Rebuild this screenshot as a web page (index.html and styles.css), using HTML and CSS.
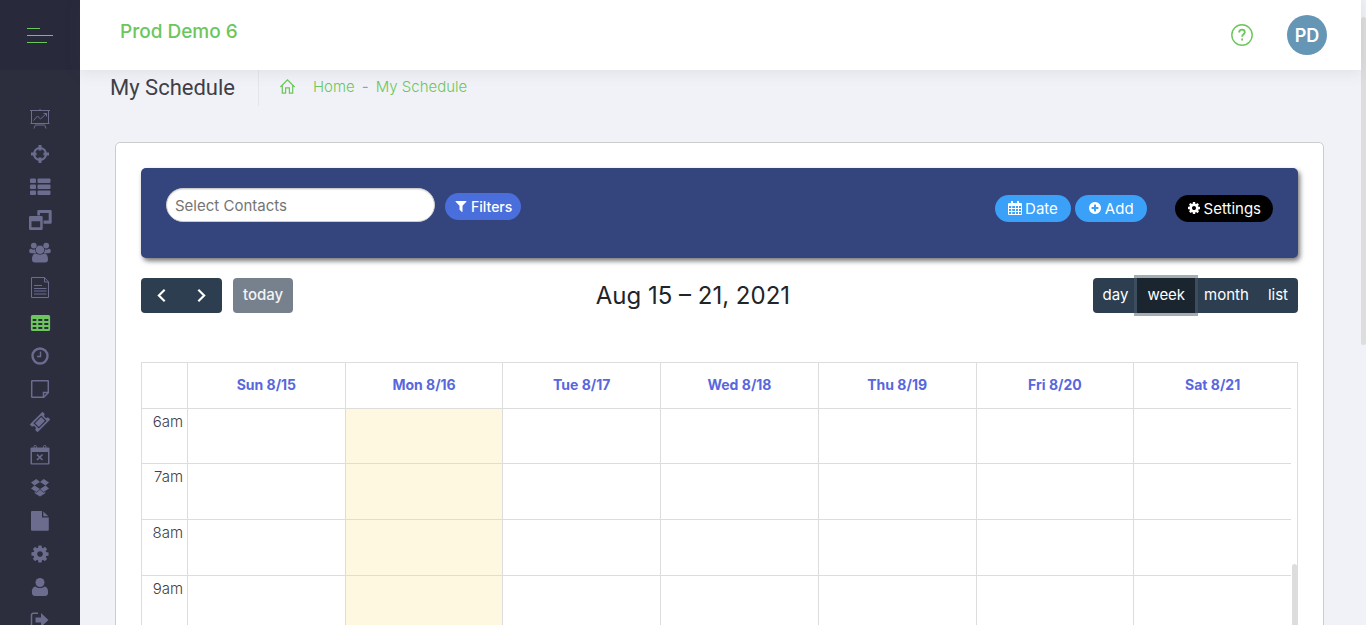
FILE: index.html
```html
<!DOCTYPE html>
<html lang="en">
<head>
    <meta charset="utf-8">
    <title>My Schedule</title>
    <link rel="stylesheet" href="styles.css">
</head>
<body>
    <aside class="sidebar">
        <button type="button" class="menu-toggle" aria-label="Toggle menu">
            <span class="bar bar-short"></span>
            <span class="bar"></span>
            <span class="bar bar-mid"></span>
        </button>
        <nav class="side-nav">
            <a href="#" class="tall" aria-label="Dashboard">
                <svg viewBox="0 0 24 24" class="thin"><path d="M2 3.500h20M12 2v1.500M3.500 3.500v13h17v-13M2.500 16.500h19M7.500 17.500l-1.500 4M16.500 17.500l1.500 4M8 18h8M5.500 13.500l4-4.500 3 3 6-5.500M15.500 6.500h3v3"/></svg>
            </a>
            <a href="#" aria-label="Leads">
                <svg viewBox="0 0 24 24"><circle cx="12" cy="12" r="6" fill="none" stroke="currentColor" stroke-width="2"/><path d="M10.500 3h3v5.500h-3zM10.500 15.500h3V21h-3zM3 10.500h5.500v3H3zM15.500 10.500H21v3h-5.500z"/></svg>
            </a>
            <a href="#" aria-label="Lists">
                <svg viewBox="0 0 24 24"><rect x="2" y="3.500" width="6" height="4.500" rx="1"/><rect x="9.500" y="3.500" width="13" height="4.500" rx="1"/><rect x="2" y="9.500" width="6" height="4.500" rx="1"/><rect x="9.500" y="9.500" width="13" height="4.500" rx="1"/><rect x="2" y="15.500" width="6" height="4.500" rx="1"/><rect x="9.500" y="15.500" width="13" height="4.500" rx="1"/></svg>
            </a>
            <a href="#" aria-label="Windows">
                <svg viewBox="0 0 24 24"><path fill-rule="evenodd" d="M10.500 2h12a1.200 1.200 0 0 1 1.200 1.200v11.300a1.200 1.200 0 0 1-1.200 1.200H15.500v-3.200h5.200V5h-8.700v2.500h-2.700V3.200A1.200 1.200 0 0 1 10.500 2zM2.200 8h11.300a1.200 1.200 0 0 1 1.200 1.200v11.600a1.200 1.200 0 0 1-1.200 1.200H2.200A1.200 1.200 0 0 1 1 20.800V9.200A1.200 1.200 0 0 1 2.200 8zM3.500 13.200v6h8.700v-6z"/></svg>
            </a>
            <a href="#" aria-label="Contacts">
                <svg viewBox="0 0 24 24"><circle cx="5.800" cy="4.600" r="2.900"/><circle cx="18.200" cy="4.600" r="2.900"/><circle cx="12" cy="8.800" r="4.300"/><path d="M3.500 8c1.500.9 2.500.7 3.500.3.100 1.600.5 2.800 1.300 4H3.600C1.800 12.300 1.200 11.500 1.200 10.300 1.200 8.800 2 7.200 3.500 8zM20.500 8c-1.500.9-2.500.7-3.500.3-.1 1.600-.5 2.800-1.300 4h4.700c1.800 0 2.400-.8 2.400-2 0-1.500-.8-3.100-2.300-2.300zM7.500 12.500c2.500 1.500 6.500 1.500 9 0 2.500 0 3.500 3 3.500 6 0 2-1 3-3 3H7c-2 0-3-1-3-3 0-3 1-6 3.500-6z"/></svg>
            </a>
            <a href="#" class="tall" aria-label="Documents">
                <svg viewBox="0 0 24 24" class="thin"><path d="M3.500 1.500h13l4 4.500v15.500h-17zM16.500 1.500V6h4M6 9.500h8M6 12.500h12.500M6 15h12.500M6 18h12.500"/></svg>
            </a>
            <a href="#" class="active" aria-label="Schedule">
                <svg viewBox="0 0 24 24"><path fill-rule="evenodd" d="M4.500 4h16a1.600 1.600 0 0 1 1.600 1.600v12.800a1.600 1.600 0 0 1-1.600 1.600h-16a1.600 1.600 0 0 1-1.600-1.600V5.600A1.600 1.600 0 0 1 4.500 4zM4.700 8v2h3.600V8zm5.600 0v2h4V8zm6 0v2h4V8zM4.700 12v2h3.600v-2zm5.600 0v2h4v-2zm6 0v2h4v-2zM4.700 16v2h3.600v-2zm5.600 0v2h4v-2zm6 0v2h4v-2z"/></svg>
            </a>
            <a href="#" aria-label="Time">
                <svg viewBox="0 0 24 24"><g fill="none" stroke="currentColor"><circle cx="12" cy="12" r="7.500" stroke-width="2.400"/><path stroke-width="1.400" d="M12.500 7.500v5h-3.500"/></g></svg>
            </a>
            <a href="#" aria-label="Notes">
                <svg viewBox="0 0 24 24"><path fill="none" stroke="currentColor" stroke-width="1.500" d="M4.200 3.700h15.600a.5.500 0 0 1 .5.500v11.500l-4.600 4.600H4.200a.5.500 0 0 1-.5-.5V4.200a.5.500 0 0 1 .5-.5zM15.500 20v-4.500H20"/></svg>
            </a>
            <a href="#" aria-label="Tickets">
                <svg viewBox="0 0 24 24"><g transform="rotate(-45 12 12)"><path fill-rule="evenodd" d="M3 6.500h18v3.300a2.200 2.200 0 0 0 0 4.400v3.300H3v-3.300a2.200 2.200 0 0 0 0-4.400zM6.500 8.200v7.600h11V8.200z"/><path d="M7.700 9.300h8.600v5.400H7.700z"/></g></svg>
            </a>
            <a href="#" aria-label="Cancelled events">
                <svg viewBox="0 0 24 24"><path fill-rule="evenodd" d="M3.500 4.500h17a1 1 0 0 1 1 1v15a1 1 0 0 1-1 1h-17a1 1 0 0 1-1-1v-15a1 1 0 0 1 1-1zM4 9v11.200h16V9z"/><rect x="6" y="2.500" width="2.400" height="4.500" rx="1" fill="none" stroke="currentColor"/><rect x="15.500" y="2.500" width="2.400" height="4.500" rx="1" fill="none" stroke="currentColor"/><path fill="none" stroke="currentColor" stroke-width="1.600" d="M9 11.500l5.500 5.500m0-5.500L9 17"/></svg>
            </a>
            <a href="#" aria-label="Dropbox">
                <svg viewBox="0 0 24 24"><path d="M8.300 3L12 6 6.500 9.500 3 6.500zM15.700 3L12 6l5.500 3.500L21 6.500zM6.500 9.500L12 13l-3.700 3L3 12.500zM17.500 9.500L12 13l3.700 3 5.300-3.500zM12 13.800l3.800 3 1.500-1v1.500L12 20.500l-5.300-3.200v-1.500l1.500 1z"/></svg>
            </a>
            <a href="#" aria-label="Files">
                <svg viewBox="0 0 24 24"><path d="M4 2h10v6.500h6.800v12.300a1 1 0 0 1-1 1H4a1 1 0 0 1-1-1V3a1 1 0 0 1 1-1zM15.300 2.500l5 4.800h-5z"/></svg>
            </a>
            <a href="#" aria-label="Settings">
                <svg viewBox="-179 -179 2150 2150"><path d="M1152 896q0-106-75-181t-181-75-181 75-75 181 75 181 181 75 181-75 75-181zm512-109v222q0 12-8 23t-20 13l-185 28q-19 54-39 91 35 50 107 138 10 12 10 25t-9 23q-27 37-99 108t-94 71q-12 0-26-9l-138-108q-44 23-91 38-16 136-29 186-7 28-36 28h-222q-14 0-24.500-8.500t-11.500-21.500l-28-184q-49-16-90-37l-141 107q-10 9-25 9-14 0-25-11-126-114-165-168-7-10-7-23 0-12 8-23 15-21 51-66.500t54-70.500q-27-50-41-99l-183-27q-13-2-21-12.500t-8-23.500v-222q0-12 8-23t19-13l186-28q14-46 39-92-40-57-107-138-10-12-10-24 0-10 9-23 26-36 98.500-107.500t94.500-71.500q13 0 26 10l138 107q44-23 91-38 16-136 29-186 7-28 36-28h222q14 0 24.500 8.500t11.500 21.500l28 184q49 16 90 37l142-107q9-9 24-9 13 0 25 10 129 119 165 170 7 8 7 22 0 12-8 23-15 21-51 66.500t-54 70.500q26 50 41 98l183 28q13 2 21 12.500t8 23.500z"/></svg>
            </a>
            <a href="#" aria-label="Profile">
                <svg viewBox="0 0 24 24"><circle cx="12" cy="7.500" r="4.500"/><path d="M7.500 11.500c2.500 2 6.500 2 9 0 2.800.3 3.600 3 3.600 6 0 2-1 3.500-3 3.500H6.900c-2 0-3-1.500-3-3.500 0-3 .8-5.700 3.600-6z"/></svg>
            </a>
            <a href="#" aria-label="Sign out">
                <svg viewBox="0 0 24 24"><path d="M13 5l7.500 7-7.500 7v-4.500H7.500v-5H13z"/><path fill="none" stroke="currentColor" stroke-width="1.500" d="M10 5.200H5.500a2 2 0 0 0-2 2v9.600a2 2 0 0 0 2 2H10"/></svg>
            </a>
        </nav>
    </aside>

    <div class="page">
        <header class="topbar">
            <a href="#" class="company">Prod Demo 6</a>
            <div class="topbar-right">
                <button type="button" class="help" aria-label="Help">
                    <svg viewBox="0 0 24 24"><circle cx="12" cy="12" r="10.200"/><path stroke-width="1.800" d="M9.200 9.500c0-1.800 1.200-2.800 2.800-2.800s2.800 1 2.800 2.500c0 2-2.700 2.200-2.700 4.600M12.100 15.500v2"/></svg>
                </button>
                <button type="button" class="avatar">PD</button>
            </div>
        </header>

        <main class="content">
            <div class="page-head">
                <h1>My Schedule</h1>
                <div class="breadcrumb">
                    <svg viewBox="0 0 18 18"><path d="M1.500 9.500L9 2l7.500 7.500M3.500 8v8h3.500v-5.500h4V16h3.500V8"/></svg>
                    <a href="#">Home</a>
                    <span>-</span>
                    <a href="#">My Schedule</a>
                </div>
            </div>

            <section class="card">
                <div class="filter-bar">
                    <input type="text" class="contacts" placeholder="Select Contacts" aria-label="Select Contacts">
                    <button type="button" class="pill pill-filter">
                        <svg viewBox="0 0 1792 1792"><path d="M1595 295q17 41-14 70l-493 493v742q0 42-39 59-13 5-25 5-27 0-45-19l-256-256q-19-19-19-45v-486l-493-493q-31-29-14-70 17-39 59-39h1280q42 0 59 39z"/></svg>
                        Filters
                    </button>
                    <div class="actions">
                        <button type="button" class="pill">
                            <svg viewBox="0 0 14 14"><path fill-rule="evenodd" d="M1 2h12a1 1 0 0 1 1 1v10a1 1 0 0 1-1 1H1a1 1 0 0 1-1-1V3a1 1 0 0 1 1-1zM1 5v2h2.200V5zm3.200 0v2H7V5zM8 5v2h2V5zm3 0v2h2V5zM1 8v2h2.200V8zm3.200 0v2H7V8zM8 8v2h2V8zm3 0v2h2V8zM1 11v2h2.200v-2zm3.200 0v2H7v-2zM8 11v2h2v-2zm3 0v2h2v-2z"/><path d="M3 0h2v4H3zM9 0h2v4H9z"/></svg>
                            Date
                        </button>
                        <button type="button" class="pill">
                            <svg viewBox="0 0 1792 1792"><path d="M1344 960v-128q0-26-19-45t-45-19h-256v-256q0-26-19-45t-45-19h-128q-26 0-45 19t-19 45v256h-256q-26 0-45 19t-19 45v128q0 26 19 45t45 19h256v256q0 26 19 45t45 19h128q26 0 45-19t19-45v-256h256q26 0 45-19t19-45zm320-64q0 209-103 385.500t-279.500 279.500-385.500 103-385.500-103-279.500-279.500-103-385.500 103-385.500 279.500-279.500 385.500-103 385.500 103 279.500 279.500 103 385.500z"/></svg>
                            Add
                        </button>
                        <button type="button" class="pill pill-settings">
                            <svg viewBox="0 0 1792 1792"><path d="M1152 896q0-106-75-181t-181-75-181 75-75 181 75 181 181 75 181-75 75-181zm512-109v222q0 12-8 23t-20 13l-185 28q-19 54-39 91 35 50 107 138 10 12 10 25t-9 23q-27 37-99 108t-94 71q-12 0-26-9l-138-108q-44 23-91 38-16 136-29 186-7 28-36 28h-222q-14 0-24.500-8.500t-11.500-21.500l-28-184q-49-16-90-37l-141 107q-10 9-25 9-14 0-25-11-126-114-165-168-7-10-7-23 0-12 8-23 15-21 51-66.500t54-70.500q-27-50-41-99l-183-27q-13-2-21-12.500t-8-23.500v-222q0-12 8-23t19-13l186-28q14-46 39-92-40-57-107-138-10-12-10-24 0-10 9-23 26-36 98.500-107.500t94.500-71.500q13 0 26 10l138 107q44-23 91-38 16-136 29-186 7-28 36-28h222q14 0 24.500 8.500t11.500 21.500l28 184q49 16 90 37l142-107q9-9 24-9 13 0 25 10 129 119 165 170 7 8 7 22 0 12-8 23-15 21-51 66.500t-54 70.500q26 50 41 98l183 28q13 2 21 12.500t8 23.500z"/></svg>
                            Settings
                        </button>
                    </div>
                </div>

                <div class="cal-toolbar">
                    <div class="cal-left">
                        <div class="btn-group">
                            <button type="button" class="arrow" aria-label="Previous week"><svg viewBox="0 0 16 16"><path d="M11 2.500L5.500 8l5.500 5.500"/></svg></button>
                            <button type="button" class="arrow" aria-label="Next week"><svg viewBox="0 0 16 16"><path d="M5 2.500L10.500 8 5 13.500"/></svg></button>
                        </div>
                        <button type="button" class="today" disabled>today</button>
                    </div>
                    <h2>Aug 15 – 21, 2021</h2>
                    <div class="btn-group">
                        <button type="button">day</button>
                        <button type="button" class="selected">week</button>
                        <button type="button">month</button>
                        <button type="button">list</button>
                    </div>
                </div>

                <div class="calendar">
                    <table>
                        <thead>
                            <tr>
                                <th class="time"></th>
                                <th><a href="#">Sun 8/15</a></th>
                                <th><a href="#">Mon 8/16</a></th>
                                <th><a href="#">Tue 8/17</a></th>
                                <th><a href="#">Wed 8/18</a></th>
                                <th><a href="#">Thu 8/19</a></th>
                                <th><a href="#">Fri 8/20</a></th>
                                <th><a href="#">Sat 8/21</a></th>
                            </tr>
                        </thead>
                        <tbody>
                            <tr><td class="time">6am</td><td></td><td class="now"></td><td></td><td></td><td></td><td></td><td></td></tr>
                            <tr><td class="time">7am</td><td></td><td class="now"></td><td></td><td></td><td></td><td></td><td></td></tr>
                            <tr><td class="time">8am</td><td></td><td class="now"></td><td></td><td></td><td></td><td></td><td></td></tr>
                            <tr><td class="time">9am</td><td></td><td class="now"></td><td></td><td></td><td></td><td></td><td></td></tr>
                        </tbody>
                    </table>
                    <div class="cal-thumb"></div>
                </div>
            </section>
        </main>
    </div>

    <div class="scroll-track"><div class="scroll-thumb"></div></div>
</body>
</html>
```

FILE: styles.css
```css
* {
    box-sizing: border-box;
}
body {
    margin: 0;
    height: 100vh;
    overflow: hidden;
    display: flex;
    background: #f1f2f7;
    color: #212529;
    font-family: Inter, "Open Sans", sans-serif;
    font-size: 15px;
}
a {
    text-decoration: none;
    color: inherit;
}
button {
    border: none;
    margin: 0;
    padding: 0;
    font: inherit;
    cursor: pointer;
}
svg {
    display: block;
    fill: currentColor;
}

/* Sidebar */
.sidebar {
    flex: none;
    width: 80px;
    background: #2c2e3e;
    overflow: hidden;
}
.menu-toggle {
    display: flex;
    flex-direction: column;
    justify-content: center;
    gap: 6px;
    width: 100%;
    height: 70px;
    padding-left: 27px;
    background: #282a3c;
}
.bar {
    width: 26px;
    height: 1px;
    background: #6cc65b;
}
.bar-short {
    width: 13px;
}
.bar-mid {
    width: 20px;
}
.side-nav {
    padding-top: 30px;
}
.side-nav a {
    display: flex;
    align-items: center;
    justify-content: center;
    height: 33px;
    color: #6b6c8e;
}
.side-nav a.tall {
    height: 37px;
}
.side-nav a.active {
    color: #6cc65b;
}
.side-nav svg {
    width: 24px;
    height: 24px;
}
.side-nav .thin {
    fill: none;
    stroke: currentColor;
    stroke-width: 1;
}

/* Top bar */
.page {
    flex: 1;
    min-width: 0;
}
.topbar {
    display: flex;
    align-items: center;
    justify-content: space-between;
    height: 70px;
    padding: 0 34px 0 40px;
    background: #fff;
    box-shadow: 0 1px 15px 1px rgba(69, 65, 78, 0.1);
    position: relative;
    z-index: 1;
}
.company {
    padding-bottom: 8px;
    color: #6cc65b;
    font-size: 19px;
    font-weight: 500;
}
.topbar-right {
    display: flex;
    align-items: center;
    gap: 33px;
}
.help {
    background: none;
    color: #6cc65b;
}
.help svg {
    width: 24px;
    height: 24px;
    fill: none;
    stroke: currentColor;
    stroke-width: 1.4;
}
.avatar {
    width: 40px;
    height: 40px;
    border-radius: 50%;
    background: #6596b5;
    color: #fff;
    font-size: 18px;
    font-weight: 600;
}

/* Page heading */
.page-head {
    display: flex;
    align-items: center;
    height: 36px;
    padding-left: 30px;
}
h1 {
    margin: 0;
    padding-right: 23px;
    color: #3f4047;
    font-family: Roboto, sans-serif;
    font-size: 22px;
    font-weight: 400;
    line-height: 36px;
}
.breadcrumb {
    display: flex;
    align-items: center;
    gap: 7px;
    height: 36px;
    padding: 0 0 3px 20px;
    border-left: 1px solid #e2e5ec;
    color: #9a9caf;
}
.breadcrumb a,
.breadcrumb svg {
    color: #6cc65b;
}
.breadcrumb a {
    font-weight: 300;
}
.breadcrumb svg {
    width: 17px;
    height: 17px;
    margin-right: 10px;
    fill: none;
    stroke: currentColor;
    stroke-width: 1.3;
}

/* Card and filter bar */
.card {
    margin: 36px 37px 30px 35px;
    padding: 25px;
    background: #fff;
    border: 1px solid #ccc;
    border-radius: 5px;
}
.filter-bar {
    display: flex;
    align-items: flex-start;
    height: 90px;
    padding: 20px 25px;
    background: #34447c;
    border-radius: 5px;
    box-shadow: 2px 3px 5px #777;
}
.contacts {
    width: 269px;
    height: 34px;
    margin-right: 10px;
    padding: 0 8px;
    border: 1px solid #ccc;
    border-radius: 17px;
    box-shadow: inset 0 1px 1px rgba(0, 0, 0, 0.1);
    font: inherit;
}
.contacts::placeholder {
    color: #757575;
}
.pill {
    display: flex;
    align-items: center;
    gap: 3px;
    height: 27px;
    padding: 0 13px 1px;
    border-radius: 14px;
    background: #3aa0f8;
    color: #fff;
}
.pill svg {
    width: 14px;
    height: 14px;
}
.pill-filter {
    margin-top: 5px;
    padding: 0 9px 1px;
    background: #4a6edb;
    font-size: 14px;
    font-weight: 500;
}
.pill-settings {
    margin-left: 24px;
    padding: 0 12px 1px;
    background: #000;
}
.actions {
    display: flex;
    gap: 4px;
    margin: 7px 0 0 auto;
}

/* Calendar toolbar */
.cal-toolbar {
    display: flex;
    align-items: center;
    justify-content: space-between;
    margin: 20px 0 49px;
}
.cal-left {
    display: flex;
    gap: 11px;
}
h2 {
    margin: 0;
    font-size: 24px;
    font-weight: 400;
    line-height: 35px;
}
.btn-group {
    display: flex;
    border-radius: 4px;
    background: #2c3e50;
    color: #fff;
}
.btn-group button {
    height: 35px;
    padding: 0 10px 2px;
    border-radius: 4px;
    background: none;
    color: #fff;
}
.btn-group button + button {
    margin-left: -1px;
}
.btn-group .arrow {
    padding: 0 12px;
}
.arrow svg {
    width: 17px;
    height: 17px;
    fill: none;
    stroke: currentColor;
    stroke-width: 2;
}
.btn-group .selected {
    border-radius: 0;
    background: #1a252f;
    box-shadow: 0 0 0 3px rgba(76, 91, 106, 0.5);
}
.today {
    height: 35px;
    padding: 0 10px 2px;
    border-radius: 4px;
    background: #76818d;
    color: #f3f4f5;
    font-weight: 500;
}

/* Week grid */
.calendar {
    position: relative;
    padding-right: 6px;
    border: 1px solid #ddd;
}
table {
    width: 100%;
    table-layout: fixed;
    border-spacing: 0;
}
th,
td {
    height: 56px;
    padding: 0;
    border-top: 1px solid #ddd;
    border-left: 1px solid #ddd;
}
tbody tr:first-child td {
    height: 55px;
}
th {
    height: 45px;
    padding-bottom: 2px;
    border-top: none;
    color: #5867dd;
    font-size: 14px;
    font-weight: 700;
}
.time {
    width: 45px;
    padding: 4px 4px 0 0;
    border-left: none;
    color: #3f4047;
    font-weight: 300;
    line-height: 18px;
    text-align: right;
    vertical-align: top;
}
.now {
    background: #fff8e1;
}
.cal-thumb {
    position: absolute;
    top: 201px;
    right: 0;
    bottom: 0;
    width: 5px;
    border-radius: 3px 3px 0 0;
    background: #ddd;
}

/* Page scrollbar */
.scroll-track {
    flex: none;
    width: 5px;
    padding-top: 17px;
}
.scroll-thumb {
    height: 54%;
    border-radius: 3px;
    background: #ddd;
}
```
